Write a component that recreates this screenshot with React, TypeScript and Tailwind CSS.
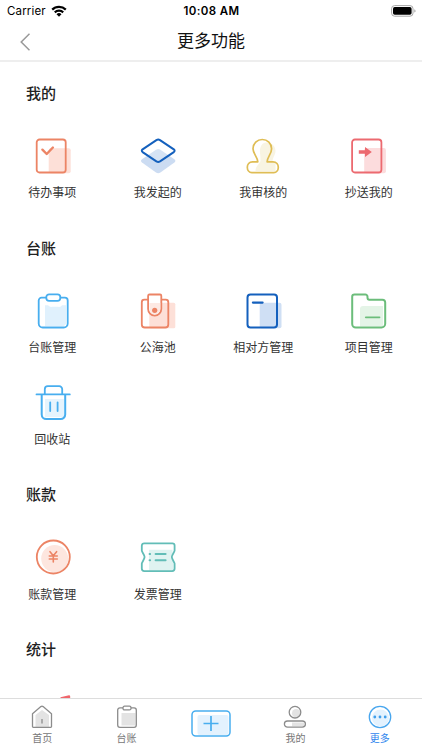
import type { ReactNode } from "react";

const Icon = ({ children }: { children: ReactNode }) => (
    <svg
        viewBox="0 0 36 36"
        className="block h-9 w-9 overflow-visible"
        fill="none"
        strokeWidth="1.8"
        strokeLinecap="round"
        strokeLinejoin="round"
    >
        {children}
    </svg>
);

const TodoIcon = () => (
    <Icon>
        <rect x="13.7" y="10.3" width="22" height="25" rx="2" fill="#fde0d8" />
        <rect x="1.7" y="1.5" width="29" height="33" rx="2.8" stroke="#ec8465" />
        <path d="M7.4 11.7l4.3 4.3 6.2-6.5" stroke="#ec8465" strokeWidth="2.4" />
    </Icon>
);

const LayersIcon = () => (
    <Icon>
        <path
            d="M16 11.7q2.2-1.4 4.4 0L34.4 21.3q2 1.6 0 3.2L20.4 34.5q-2.2 1.4-4.4 0L2 24.5q-2-1.6 0-3.2z"
            fill="#ccdcf2"
        />
        <path
            d="M16.4 2.1q1.8-1.1 3.6 0L33.8 11.3q1.6 1.4 0 2.8L20 23.4q-1.8 1.1-3.6 0L2.6 14.1q-1.6-1.4 0-2.8z"
            fill="#fff"
            fillOpacity=".2"
            stroke="#1460bd"
            strokeWidth="2"
        />
    </Icon>
);

const StampIcon = () => (
    <Icon>
        <g transform="translate(-.5 0)">
            <path
                d="M20 4.5c6 0 10 3.2 10 8.5 0 4-3 6.5-3 11h3v9H10c0-5 4-7 5-10 0-3 0-4-.5-8s1-10 5.5-10.5z"
                fill="#f8f4e2"
            />
            <path
                d="M12.300 23.800C12.300 19 7.500 16 7.500 10.800a9.300 9.300 0 0 1 18.600 0C26.100 16 21.600 19 21.600 23.800h5.900c3.500 0 5.300 2.600 5.300 5.500s-1.800 5.300-4.500 5.300h-22c-2.700 0-4.500-2.400-4.500-5.300s1.800-5.500 5.300-5.500z"
                stroke="#dfbd55"
                strokeWidth="1.7"
            />
        </g>
    </Icon>
);

const SendIcon = () => (
    <Icon>
        <rect x="13.2" y="10" width="21.7" height="25.3" rx="2" fill="#fcdcdd" />
        <rect x="1.1" y="1.5" width="29.3" height="33" rx="2.8" stroke="#ec6a70" />
        <path d="M7.8 12.2H14V9l6.8 5-6.8 5v-3.200H7.800z" fill="#ec6a70" />
    </Icon>
);

const ClipboardIcon = () => (
    <Icon>
        <path d="M10 12.3h3q2 2 4 1.5h6q3 .5 4-1.5h4V31l-2 2H10z" fill="#e0f1fd" />
        <path
            d="M11 4.700H6.500a2.800 2.800 0 0 0-2.800 2.800v23a4 4 0 0 0 4 4h21a4 4 0 0 0 4-4v-23a2.800 2.800 0 0 0-2.800-2.800H25.700"
            stroke="#48aeef"
        />
        <rect x="11.3" y="1.3" width="14" height="6.5" rx="2.8" stroke="#48aeef" />
    </Icon>
);

const WalletIcon = () => (
    <Icon>
        <rect x="9.3" y="9.7" width="26" height="25.5" rx="1.5" fill="#fde0d8" />
        <path
            d="M7.500 6.700H4.300a2.500 2.500 0 0 0-2.500 2.500V31.500a3 3 0 0 0 3 3h20.500a3 3 0 0 0 3-3V9.200a2.500 2.500 0 0 0-2.500-2.500H22"
            stroke="#ec8465"
        />
        <path
            d="M9.500 1.500h10.500a1.300 1.300 0 0 1 1.300 1.300V16a6.600 6.600 0 0 1-13.200 0V2.800a1.400 1.400 0 0 1 1.400-1.300z"
            fill="#fff"
            stroke="#ec8465"
        />
        <path d="M9.500 10h10.700v6a5.300 5.300 0 0 1-10.600 0z" fill="#fde9e3" />
        <circle cx="14.7" cy="17.3" r="2.6" fill="#ec8465" />
    </Icon>
);

const PartnerIcon = () => (
    <Icon>
        <g transform="translate(-.5 0)">
            <rect x="14.2" y="9.7" width="21.8" height="25.5" rx="2" fill="#cfdff4" />
            <rect x="2" y="1.5" width="29.5" height="33" rx="3" stroke="#1460bd" strokeWidth="2" />
            <path d="M7.400 9.600h9.700" stroke="#1460bd" strokeWidth="2.2" />
        </g>
    </Icon>
);

const FolderIcon = () => (
    <Icon>
        <path d="M12 13h20v20.500H9V16a3 3 0 0 1 3-3z" fill="#e4f4e7" />
        <path
            d="M3.500 1.500h10.800a2.200 2.200 0 0 1 2.200 2.200v1.100a2 2 0 0 0 2 2h12.900a2.800 2.800 0 0 1 2.800 2.800v21.200a3.700 3.700 0 0 1-3.700 3.700H4.700a3.500 3.500 0 0 1-3.500-3.500V3.800a2.300 2.300 0 0 1 2.300-2.300z"
            stroke="#6cbd7b"
            strokeWidth="2"
        />
        <path d="M14.800 24.300h13.700" stroke="#6cbd7b" />
    </Icon>
);

const TrashIcon = () => (
    <Icon>
        <path d="M10 14h19v18H10z" fill="#e6f4fd" />
        <path d="M1.500 9.400h33.300" stroke="#48aeef" />
        <path d="M9.800 9V4.200a3 3 0 0 1 3-3h11.400a3 3 0 0 1 3 3V9" stroke="#48aeef" />
        <path
            d="M6.700 10v19.500a4.500 4.500 0 0 0 4.500 4.500h14.500a4.500 4.500 0 0 0 4.500-4.500V10"
            stroke="#48aeef"
            strokeWidth="2"
        />
        <path d="M15.200 17.300v8.700M22.600 17.300v8.700" stroke="#48aeef" />
    </Icon>
);

const MoneyIcon = () => (
    <Icon>
        <circle cx="19.7" cy="19.6" r="13.5" fill="#fde6df" />
        <circle cx="18.3" cy="18" r="16.500" stroke="#ec8465" />
        <path
            d="M15 12.700l3.300 4 3.300-4M14.300 17h8M14.300 20h8M18.300 17v6"
            stroke="#ec8465"
            strokeWidth="1.6"
        />
    </Icon>
);

const TicketIcon = () => (
    <Icon>
        <path d="M9 10.800h23.500v3l-2 4.500 3 4v9.500H9z" fill="#dff3f1" />
        <path
            d="M4.300 4.300h28a2.300 2.300 0 0 1 2.300 2.300v5c0 1.600-2.800 4.200-2.800 6.500s2.800 4.900 2.800 6.500v5a2.500 2.500 0 0 1-2.500 2.500H4.300a2.500 2.500 0 0 1-2.500-2.500v-5c0-1.600 2.800-4.200 2.800-6.500s-2.800-4.900-2.800-6.500v-5A2.500 2.500 0 0 1 4.300 4.300z"
            stroke="#62bdb7"
        />
        <path d="M9.600 14.900h.5M9.600 21.300h.5M15.600 14.900h10M15.600 21.300h10" stroke="#62bdb7" strokeWidth="2" />
    </Icon>
);

const StatsIcon = () => (
    <Icon>
        <path d="M25.500 3.300L34 1.200q1.200 0 1.200 1.200V12L25.500 5z" fill="#f0666c" />
    </Icon>
);

const sections = [
    {
        title: "我的",
        items: [
            { label: "待办事项", icon: <TodoIcon /> },
            { label: "我发起的", icon: <LayersIcon /> },
            { label: "我审核的", icon: <StampIcon /> },
            { label: "抄送我的", icon: <SendIcon /> },
        ],
    },
    {
        title: "台账",
        items: [
            { label: "台账管理", icon: <ClipboardIcon /> },
            { label: "公海池", icon: <WalletIcon /> },
            { label: "相对方管理", icon: <PartnerIcon /> },
            { label: "项目管理", icon: <FolderIcon /> },
            { label: "回收站", icon: <TrashIcon /> },
        ],
    },
    {
        title: "账款",
        items: [
            { label: "账款管理", icon: <MoneyIcon /> },
            { label: "发票管理", icon: <TicketIcon /> },
        ],
    },
    {
        title: "统计",
        items: [{ label: "", icon: <StatsIcon /> }],
    },
];

const tabs = [
    {
        label: "首页",
        icon: (
            <>
                <path d="M5.500 10L12 5l7 5v12H5.500z" fill="#e3e3e3" />
                <path
                    d="M2.500 8.700L10.900 1.600q1.100-.8 2.200 0L21.500 8.700V21.500a.8.800 0 0 1-.8.800H3.300a.8.800 0 0 1-.8-.8z"
                    stroke="#8c8c8c"
                />
                <path d="M12 14v4.500" stroke="#8c8c8c" />
            </>
        ),
    },
    {
        label: "台账",
        icon: (
            <>
                <path d="M6.500 8h14v12.500h-14z" fill="#e3e3e3" />
                <rect x="2.700" y="2.900" width="18.600" height="19.400" rx="2.200" stroke="#8c8c8c" />
                <rect x="8" y="1.200" width="8" height="3.700" rx="1.500" fill="#fff" stroke="#8c8c8c" />
            </>
        ),
    },
    { label: "", icon: null },
    {
        label: "我的",
        icon: (
            <>
                <circle cx="13.200" cy="8.200" r="4.300" fill="#e3e3e3" />
                <path d="M9 17.500h12v3.800H9z" fill="#e3e3e3" />
                <circle cx="12" cy="7.200" r="5.800" stroke="#8c8c8c" />
                <rect x="1.400" y="16" width="21" height="6.200" rx="3.100" stroke="#8c8c8c" />
            </>
        ),
    },
    {
        label: "更多",
        active: true,
        icon: (
            <>
                <circle cx="12.500" cy="13" r="8.500" fill="#e3f2fe" />
                <circle cx="12" cy="12" r="10.700" stroke="#48a6ee" strokeWidth="1.300" />
                <g fill="#3f9fec">
                    <circle cx="6.800" cy="12" r="1.400" />
                    <circle cx="12" cy="12" r="1.400" />
                    <circle cx="17.200" cy="12" r="1.400" />
                </g>
            </>
        ),
    },
];

const StatusBar = () => (
    <div className="grid h-[22px] shrink-0 grid-cols-3 items-center pl-[7px] pr-[6px] font-[Inter] text-[11.5px] leading-none text-black">
        <div className="flex items-center gap-[5px]">
            <span className="pt-[2px] tracking-[0.15px]">Carrier</span>
            <svg viewBox="0 0 16 12" className="h-[12px] w-[16px]" fill="none" stroke="#000" strokeWidth="2.200">
                <path d="M1.200 4.600a9.700 9.700 0 0 1 13.600 0M3.800 7.400a6 6 0 0 1 8.400 0" />
                <path d="M5.500 9.200a3.600 3.600 0 0 1 5 0L8 11.700z" fill="#000" stroke="none" />
            </svg>
        </div>
        <span className="pt-[2px] text-center font-semibold tracking-[0.35px] whitespace-nowrap">10:08 AM</span>
        <svg viewBox="0 0 25 12" className="h-[12px] w-[25px] justify-self-end">
            <rect x=".6" y=".6" width="21.400" height="10.600" rx="3" fill="#fff" stroke="#a6a6a6" />
            <rect x="2" y="2" width="18.600" height="7.800" rx="1.700" fill="#000" />
            <path d="M23.300 4.200q1.300.5 1.300 1.700t-1.300 1.700z" fill="#a6a6a6" />
        </svg>
    </div>
);

const App = () => {
    return (
        <div className="flex h-[750px] w-[422px] flex-col overflow-hidden bg-white font-['Noto_Sans_CJK_SC',sans-serif] text-[#333]">
            <StatusBar />

            {/* Title bar */}
            <header className="grid h-10 shrink-0 grid-cols-3 items-center border-b-2 border-[#eee] px-5">
                <svg viewBox="0 0 10 18" className="mt-[1px] h-[18px] w-[10px]" fill="none" stroke="#999" strokeWidth="1.500">
                    <path d="M9.500.7L1.200 9l8.300 8.300" />
                </svg>
                <h1 className="pb-[3px] text-center text-[17px] leading-none text-[#111]">更多功能</h1>
            </header>

            {/* Feature groups */}
            <main className="min-h-0 flex-1 overflow-hidden pt-[21px]">
                {sections.map((section) => (
                    <section key={section.title} className="pb-[17.700px]">
                        <h2 className="px-[26px] text-[15px] font-medium leading-5 text-[#222]">{section.title}</h2>
                        <div className="grid grid-cols-4 pt-[25px]">
                            {section.items.map((item) => (
                                <div key={item.label} className="flex h-[92px] flex-col items-center pt-[10px]">
                                    {item.icon}
                                    <span className="mt-[9.400px] pr-px text-[12px] leading-[18px]">{item.label}</span>
                                </div>
                            ))}
                        </div>
                    </section>
                ))}
            </main>

            {/* Tab bar */}
            <nav className="grid h-[52px] shrink-0 grid-cols-5 border-t border-[#ddd]">
                {tabs.map((tab, index) =>
                    tab.icon ? (
                        <div key={index} className="flex flex-col items-center pt-[6px]">
                            <svg viewBox="0 0 24 24" className="h-6 w-6" fill="none" strokeWidth="1.300">
                                {tab.icon}
                            </svg>
                            <span
                                className={
                                    tab.active
                                        ? "mt-[1.500px] text-[10px] leading-[14px] text-[#2f86ee]"
                                        : "mt-[1.500px] text-[10px] leading-[14px] text-[#777]"
                                }
                            >
                                {tab.label}
                            </span>
                        </div>
                    ) : (
                        <div key={index} className="flex justify-center pt-[11px]">
                            <svg viewBox="0 0 40 27" className="h-[27px] w-10" fill="none" stroke="#48aeef" strokeWidth="1.500">
                                <rect x="6.500" y="5" width="31" height="20" rx="2" fill="#e3f2fe" stroke="none" />
                                <rect x="1" y="1" width="38" height="25" rx="3.800" />
                                <path d="M12.500 13.500h15M20 6v15" strokeWidth="1.700" />
                            </svg>
                        </div>
                    )
                )}
            </nav>
        </div>
    );
};

export default App;
